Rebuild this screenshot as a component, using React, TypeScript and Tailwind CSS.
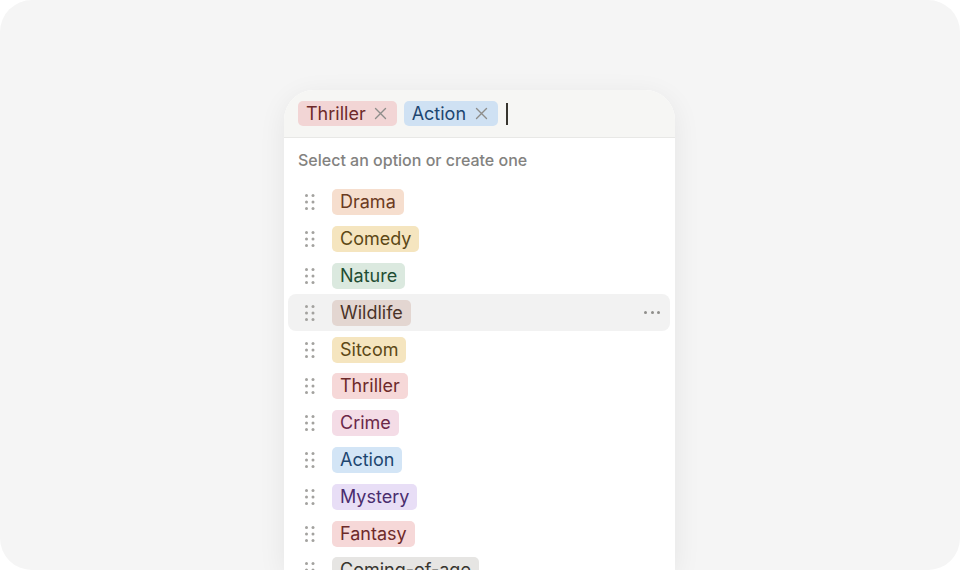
import React from "react";

type Opt = { name: string; bg: string; fg: string };

const options: Opt[] = [
  { name: "Drama", bg: "bg-[#f6dece]", fg: "text-[#6b3a1e]" },
  { name: "Comedy", bg: "bg-[#f5e5bf]", fg: "text-[#5c4816]" },
  { name: "Nature", bg: "bg-[#dbe9df]", fg: "text-[#1f4d33]" },
  { name: "Wildlife", bg: "bg-[#e3d6d1]", fg: "text-[#4a3329]" },
  { name: "Sitcom", bg: "bg-[#f5e5bf]", fg: "text-[#5c4816]" },
  { name: "Thriller", bg: "bg-[#f6d8d8]", fg: "text-[#6e2a2a]" },
  { name: "Crime", bg: "bg-[#f4dce6]", fg: "text-[#6b2849]" },
  { name: "Action", bg: "bg-[#d3e5f6]", fg: "text-[#1d4670]" },
  { name: "Mystery", bg: "bg-[#e8def6]", fg: "text-[#4a2d6e]" },
  { name: "Fantasy", bg: "bg-[#f6d8d8]", fg: "text-[#6e2a2a]" },
  { name: "Coming-of-age", bg: "bg-[#e6e5e3]", fg: "text-[#37352f]" },
];

function Handle() {
  return (
    <svg width="14" height="20" viewBox="0 0 14 20" className="text-[#a3a29f]">
      {[3.5, 10].map((x) =>
        [3.5, 10, 16.5].map((y) => <circle key={`${x}-${y}`} cx={x} cy={y} r="1.5" fill="currentColor" />)
      )}
    </svg>
  );
}

function XIcon() {
  return (
    <svg width="13" height="13" viewBox="0 0 13 13" className="text-[#8e8d8a]">
      <path d="M1.5 1.5L11.5 11.5M11.5 1.5L1.5 11.5" stroke="currentColor" strokeWidth="1.4" strokeLinecap="round" />
    </svg>
  );
}

export default function App() {
  return (
    <div className="w-[960px] h-[570px] bg-white" style={{ fontFamily: "Inter, 'Noto Sans', sans-serif" }}>
      <div className="w-[960px] h-[570px] bg-[#f5f5f5] rounded-[32px] overflow-hidden flex justify-center pt-[90px] pr-[1px]">
        <div className="w-[391px] rounded-t-[30px] bg-white shadow-[0_6px_28px_rgba(0,0,0,0.07)] flex flex-col">
          <div className="h-[48px] shrink-0 bg-[#f6f6f4] rounded-t-[30px] border-b border-[#e8e8e6] flex items-center gap-[7px] pl-[14px]">
            <span className="h-[25px] rounded-[5px] bg-[#f2d5d5] text-[#6e2a2a] text-[18px] leading-none flex items-center pl-[8px] pr-[10px] gap-[8px]">
              Thriller
              <XIcon />
            </span>
            <span className="h-[25px] rounded-[5px] bg-[#cfe1f3] text-[#1d4670] text-[18px] leading-none flex items-center pl-[8px] pr-[10px] gap-[9px]">
              Action
              <XIcon />
            </span>
            <span className="w-[2px] h-[22px] bg-[#37352f] ml-[1px]" />
          </div>
          <div className="h-[46px] shrink-0 flex items-start pl-[14px] pt-[11px] leading-[22px] text-[16px] font-medium text-[#83827f]">
            Select an option or create one
          </div>
          <div className="flex flex-col px-[4px]">
            {options.map((o) => {
              const hover = o.name === "Wildlife";
              return (
                <div
                  key={o.name}
                  className={`h-[36.8px] shrink-0 flex items-center rounded-[8px] pl-[15px] pr-[8px] mr-[1px] ${hover ? "bg-[#f2f2f2]" : ""}`}
                >
                  <Handle />
                  <span
                    className={`ml-[15px] h-[26px] rounded-[5px] px-[8px] flex items-center text-[18px] leading-none ${o.bg} ${o.fg}`}
                  >
                    {o.name}
                  </span>
                  {hover && (
                    <div className="ml-auto flex items-center gap-[3.5px] pr-[2px]">
                      <span className="w-[3px] h-[3px] rounded-full bg-[#8f8e8b]" />
                      <span className="w-[3px] h-[3px] rounded-full bg-[#8f8e8b]" />
                      <span className="w-[3px] h-[3px] rounded-full bg-[#8f8e8b]" />
                    </div>
                  )}
                </div>
              );
            })}
          </div>
        </div>
      </div>
    </div>
  );
}
